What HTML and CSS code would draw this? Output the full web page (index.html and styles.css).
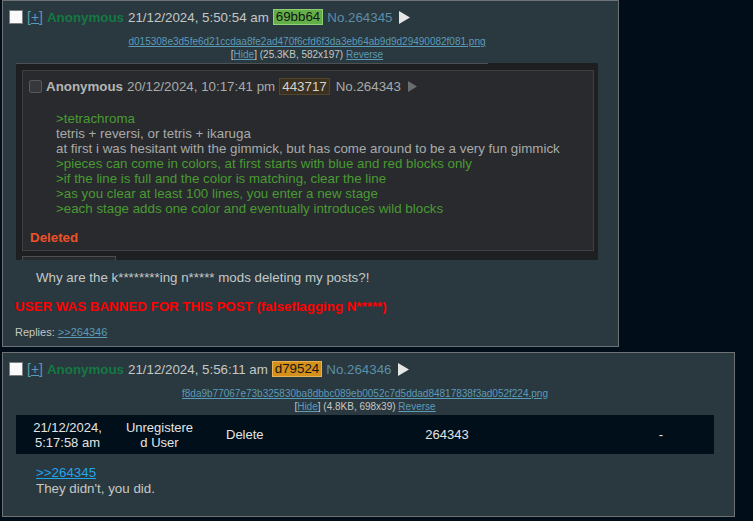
FILE: index.html
```html
<!DOCTYPE html>
<html lang="en">
<head>
<meta charset="utf-8">
<title>Thread</title>
<link rel="stylesheet" href="styles.css">
</head>
<body>
<div class="thread">
  <div class="post">
    <div class="post-head">
      <span class="cb"></span>
      <span class="expand">[<u>+</u>]</span>
      <span class="name">Anonymous</span>
      <span class="date">21/12/2024, 5:50:54 am</span>
      <span class="uid uid-green">69bb64</span>
      <a class="no">No.264345</a>
      <svg class="tri" width="11" height="13" viewBox="0 0 11 13"><polygon points="0,0 11,6.5 0,13" fill="#e6e6e6"/></svg>
    </div>
    <div class="file-block">
      <div class="file-info">
        <a class="link">d015308e3d5fe6d21ccdaa8fe2ad470f6cfd6f3da3eb64ab9d9d29490082f081.png</a><br>
        [<a class="link">Hide</a>] (25.3KB, 582x197) <a class="link">Reverse</a>
      </div>
      <div class="shot shot-post">
        <div class="shot-topline"></div>
        <div class="inner-post">
          <div class="inner-head">
            <span class="icb"></span>
            <span class="iname">Anonymous</span>
            <span class="idate">20/12/2024, 10:17:41 pm</span>
            <span class="iuid">443717</span>
            <span class="ino">No.264343</span>
            <svg class="itri" width="9" height="11" viewBox="0 0 9 11"><polygon points="0,0 9,5.5 0,11" fill="#6a6c6e"/></svg>
          </div>
          <div class="inner-body">
            <div class="green">&gt;tetrachroma</div>
            <div>tetris + reversi, or tetris + ikaruga</div>
            <div>at first i was hesitant with the gimmick, but has come around to be a very fun gimmick</div>
            <div class="green">&gt;pieces can come in colors, at first starts with blue and red blocks only</div>
            <div class="green">&gt;if the line is full and the color is matching, clear the line</div>
            <div class="green">&gt;as you clear at least 100 lines, you enter a new stage</div>
            <div class="green">&gt;each stage adds one color and eventually introduces wild blocks</div>
          </div>
          <div class="deleted">Deleted</div>
        </div>
        <div class="inner-next"></div>
      </div>
    </div>
    <div class="msg msg-first">Why are the k********ing n***** mods deleting my posts?!</div>
    <div class="banned">USER WAS BANNED FOR THIS POST (falseflagging N*****)</div>
    <div class="replies">Replies: <a class="link">&gt;&gt;264346</a></div>
  </div>

  <div class="post post-second">
    <div class="post-head">
      <span class="cb"></span>
      <span class="expand">[<u>+</u>]</span>
      <span class="name">Anonymous</span>
      <span class="date">21/12/2024, 5:56:11 am</span>
      <span class="uid uid-orange">d79524</span>
      <a class="no">No.264346</a>
      <svg class="tri" width="11" height="13" viewBox="0 0 11 13"><polygon points="0,0 11,6.5 0,13" fill="#e6e6e6"/></svg>
    </div>
    <div class="file-block">
      <div class="file-info">
        <a class="link">f8da9b77067e73b325830ba8dbbc089eb0052c7d5ddad84817838f3ad052f224.png</a><br>
        [<a class="link">Hide</a>] (4.8KB, 698x39) <a class="link">Reverse</a>
      </div>
      <div class="shot shot-table">
        <div class="tcell tc-date">21/12/2024, 5:17:58 am</div>
        <div class="tcell tc-user"><span>Unregistered User</span></div>
        <div class="tcell tc-action">Delete</div>
        <div class="tcell tc-id">264343</div>
        <div class="tcell"></div>
        <div class="tcell tc-dash">-</div>
      </div>
    </div>
    <div class="msg msg-second">
      <a class="quotelink">&gt;&gt;264345</a><br>
      They didn't, you did.
    </div>
  </div>
</div>
</body>
</html>
```

FILE: styles.css
```css
html, body {
  margin: 0;
  padding: 0;
  background: #010e19;
}

body {
  font-family: "Liberation Sans", Arial, sans-serif;
  font-size: 13.33px;
  color: #c5c8c6;
  width: 753px;
  height: 521px;
  overflow: hidden;
}

.thread {
  display: flex;
  flex-direction: column;
  align-items: flex-start;
  gap: 5px;
  padding: 0 2px;
}

.post {
  background: #2a3840;
  border: 1px solid #6f7275;
  padding: 3px 20px 7px 6px;
}

.post-second {
  padding-bottom: 19px;
}

.post-head {
  display: flex;
  align-items: center;
  gap: 4px;
  height: 26px;
  white-space: nowrap;
}

.cb {
  width: 12px;
  height: 12px;
  background: #fafafa;
  border: 1px solid #7c7f82;
  flex: none;
}

.expand {
  color: #5b9bb8;
  font-size: 14px;
}

.expand u {
  text-decoration: underline;
}

.name {
  color: #157a42;
  font-weight: bold;
}

.date {
  color: #c5c8c6;
}

.uid {
  padding: 0 2px;
  line-height: 14px;
  color: #151515;
  border: 1px solid;
}

.uid-green {
  background: #63b049;
  border-color: #8fd073;
}

.uid-orange {
  background: #d3901a;
  border-color: #e8b255;
}

.no {
  color: #5a8fa8;
}

.tri {
  margin-left: 2px;
  display: block;
}

.file-block {
  margin-left: 7px;
  width: fit-content;
  margin-top: 5px;
}

.file-info {
  font-size: 10px;
  line-height: 13px;
  text-align: center;
  color: #c5c8c6;
  margin-bottom: 2px;
}

.link {
  color: #5b9bb8;
  text-decoration: underline;
}

/* screenshot of a post */
.shot-post {
  width: 582px;
  height: 197px;
  background: #1d1f21;
  overflow: hidden;
}

.shot-topline {
  width: 472px;
  height: 1px;
  background: #4d5054;
}

.inner-post {
  margin: 6px 0 0 6px;
  background: #282a2e;
  border: 1px solid #3d4044;
  padding: 4px 0 0 6px;
  box-sizing: border-box;
  width: 572px;
  height: 181px;
}

.inner-head {
  display: flex;
  align-items: center;
  gap: 4px;
  height: 22px;
  white-space: nowrap;
  color: #a9abaa;
}

.icb {
  width: 11px;
  height: 11px;
  background: #36383c;
  border: 1px solid #55585c;
  border-radius: 2px;
  flex: none;
}

.iname {
  font-weight: bold;
  color: #b4b6b5;
}

.iuid {
  padding: 0 2px;
  line-height: 15px;
  background: #3a3120;
  border: 1px solid #52452a;
  color: #d2d2d0;
  margin-right: 2px;
}

.ino {
  color: #a9abaa;
}

.itri {
  margin-left: 3px;
  display: block;
}

.inner-body {
  margin: 14px 0 0 27px;
  font-size: 13.33px;
  line-height: 15px;
  color: #a8aaa9;
  white-space: nowrap;
}

.green {
  color: #4a9a32;
}

.deleted {
  margin: 13px 0 0 1px;
  line-height: 17px;
  font-weight: bold;
  color: #ec5128;
}

.inner-next {
  margin: 5px 0 0 6px;
  width: 92px;
  height: 10px;
  background: #282a2e;
  border: 1px solid #4b4e52;
}

/* screenshot of a log table */
.shot-table {
  width: 698px;
  height: 39px;
  background: #010f1a;
  display: grid;
  grid-template-columns: 103px 81px 116px 262px 30px 106px;
  align-items: center;
  color: #e4e4e4;
  font-size: 13px;
  line-height: 15px;
}

.tcell {
  text-align: center;
}

.tc-date {
  width: 76px;
  justify-self: center;
}

.tc-user span {
  display: block;
  width: 70px;
  margin: 0 auto;
  word-break: break-all;
}

.tc-action {
  text-align: left;
  padding-left: 26px;
}

.msg {
  margin-left: 27px;
  line-height: 16px;
  color: #c5c8c6;
}

.msg-first {
  margin-top: 10px;
}

.msg-second {
  margin-top: 11px;
}

.quotelink {
  color: #20a6ea;
  text-decoration: underline;
}

.banned {
  margin: 12px 0 0 6px;
  line-height: 18px;
  font-weight: bold;
  color: #ff0000;
}

.replies {
  margin: 9px 0 0 6px;
  font-size: 11px;
  line-height: 14px;
  color: #c5c8c6;
}
```
